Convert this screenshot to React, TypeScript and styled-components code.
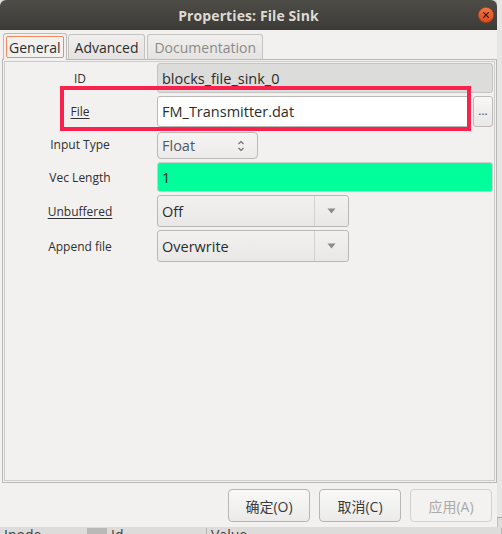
import React from "react";
import styled, { createGlobalStyle, css } from "styled-components";

const GlobalStyle = createGlobalStyle`
  html, body { margin: 0; padding: 0; background: #deddda; }
  body { font-family: "Open Sans", "Noto Sans", "Noto Sans CJK SC", sans-serif; color: #3c3c3c; }
  * { box-sizing: border-box; }
`;

const Screen = styled.div`
  width: 502px;
  height: 534px;
  overflow: hidden;
  display: grid;
  grid-template-columns: 497px 5px;
  grid-template-rows: 527px 7px;
`;

const Window = styled.div`
  display: flex;
  flex-direction: column;
  background: #f2f1f0;
  border-radius: 6px 6px 0 0;
  overflow: hidden;
  box-shadow: 1px 0 0 rgba(0, 0, 0, 0.12);
`;

const TitleBar = styled.div`
  height: 30px;
  flex: none;
  display: grid;
  grid-template-columns: 1fr auto 1fr;
  align-items: center;
  background: linear-gradient(#4d4c47, #3c3b37);
  color: #dfdbd2;
  font-weight: 700;
  font-size: 14px;
`;

const Title = styled.div`
  grid-column: 2;
  letter-spacing: 0.1px;
`;

const CloseBtn = styled.div`
  grid-column: 3;
  justify-self: end;
  margin-right: 3px;
  width: 16px;
  height: 16px;
  display: flex;
`;

const Body = styled.div`
  flex: 1;
  display: flex;
  flex-direction: column;
  padding: 3px 0 5px 0;
`;

const TabRow = styled.div`
  display: flex;
  align-items: flex-end;
  height: 26px;
  padding-left: 3px;
  position: relative;
  z-index: 1;
`;

const Tab = styled.div<{ $active?: boolean; $dim?: boolean; $gap?: number }>`
  display: flex;
  align-items: center;
  justify-content: center;
  font-size: 14px;
  margin-left: ${(p) => p.$gap ?? 0}px;
  border: 1px solid #c4c3c0;
  border-bottom: none;
  border-radius: 3px 3px 0 0;
  color: ${(p) => (p.$dim ? "#8b8a88" : "#2e2e2e")};
  ${(p) =>
    p.$active
      ? css`
          height: 27px;
          margin-bottom: -1px;
          padding: 2px;
          background: #f2f1f0;
          border-color: #bcbbb8;
        `
      : css`
          height: 25px;
          padding: 0 6px;
          background: linear-gradient(#f0efee, #e4e3e1);
        `}
`;

const FocusRing = styled.span`
  height: 100%;
  display: flex;
  align-items: center;
  padding: 0 2px;
  border: 1px solid #ef8a62;
  border-radius: 2px;
`;

const Panel = styled.div`
  margin-left: 2px;
  width: 495px;
  height: 424px;
  border: 1px solid #b9b8b5;
  padding: 1px;
  background: #f2f1f0;
`;

const Frame = styled.div`
  height: 100%;
  border: 1px solid #cdccc9;
  padding: 1px 1px 0 0;
  display: flex;
  flex-direction: column;
  gap: 3px;
`;

const Row = styled.div<{ $h: number }>`
  display: grid;
  grid-template-columns: 150px 1fr;
  column-gap: 2px;
  height: ${(p) => p.$h}px;
  align-items: center;
  position: relative;
`;

const Label = styled.div<{ $underline?: boolean }>`
  text-align: center;
  font-size: 12px;
  color: #2f2f2f;
  text-decoration: ${(p) => (p.$underline ? "underline" : "none")};
  text-underline-offset: 2px;
  align-self: center;
`;

const Entry = styled.div<{ $tone?: "readonly" | "normal" | "ok" }>`
  height: 100%;
  display: flex;
  align-items: center;
  padding-left: 4px;
  font-size: 14.5px;
  color: #2c2c2c;
  border-radius: 3px;
  border: 1px solid #bab9b6;
  background: ${(p) =>
    p.$tone === "readonly" ? "#dcdcdb" : p.$tone === "ok" ? "#00fe9a" : "#ffffff"};
  ${(p) => p.$tone === "readonly" && css`border-color: #c5c4c1;`}
  ${(p) => p.$tone === "ok" && css`border-color: #c8d0cc;`}
`;

const FileWrap = styled.div`
  height: 100%;
  display: grid;
  grid-template-columns: 1fr 20px;
  column-gap: 3px;
`;

const SmallButton = styled.div`
  display: flex;
  align-items: center;
  justify-content: center;
  border: 1px solid #bcbbb8;
  border-radius: 3px;
  background: linear-gradient(#f7f7f6, #e9e8e7);
  font-size: 12px;
  color: #4a4a4a;
  padding-bottom: 2px;
`;

const Spin = styled.div`
  align-self: end;
  width: 101px;
  height: 27px;
  display: grid;
  grid-template-columns: 1fr 20px;
  align-items: center;
  border: 1px solid #bab9b6;
  border-radius: 4px;
  background: linear-gradient(#f5f4f3, #eceaea);
  font-size: 14.5px;
  color: #4e5964;
  padding-left: 4px;
`;

const Combo = styled.div`
  width: 192px;
  height: 100%;
  display: grid;
  grid-template-columns: 1fr 34px;
  border: 1px solid #b9b8b5;
  border-radius: 3px;
  background: linear-gradient(#f2f1f0, #e9e8e7);
  font-size: 14.5px;
  color: #2c2c2c;
`;

const ComboText = styled.div`
  display: flex;
  align-items: center;
  padding-left: 4px;
`;

const ComboArrow = styled.div`
  display: flex;
  align-items: center;
  justify-content: center;
  border-left: 1px solid #d2d1ce;
`;

const Highlight = styled.div`
  position: absolute;
  left: 55px;
  top: -10px;
  width: 411px;
  height: 45px;
  border: 4px solid #f9214e;
  pointer-events: none;
`;

const ButtonRow = styled.div`
  display: flex;
  justify-content: flex-end;
  gap: 9px;
  margin-top: 6px;
  padding-right: 5px;
`;

const DialogButton = styled.div<{ $disabled?: boolean }>`
  width: 82px;
  height: 33px;
  display: flex;
  align-items: center;
  justify-content: center;
  font-family: "Open Sans", "Noto Sans CJK SC", sans-serif;
  font-size: 14px;
  border-radius: 4px;
  ${(p) =>
    p.$disabled
      ? css`
          color: #aaa9a7;
          border: 1px solid #d2d1ce;
          background: #f3f2f1;
        `
      : css`
          color: #3a3a3a;
          border: 1px solid #b7b6b3;
          background: linear-gradient(#f9f9f8, #ebeae9);
        `}
`;

const Side = styled.div`
  background: #e6e6e4;
  border-bottom: 1px solid #a9a9a7;
  margin-bottom: 9px;
`;

const Strip = styled.div`
  grid-column: 1 / span 2;
  background: #dddcda;
  overflow: hidden;
  display: flex;
  font-size: 14px;
  color: #3a3a3a;
  line-height: 14px;
`;

const HeadCell = styled.div<{ $w: number; $dark?: boolean }>`
  width: ${(p) => p.$w}px;
  flex: none;
  margin-top: 1px;
  padding-left: 4px;
  border-right: 1px solid #b8b7b4;
  background: ${(p) => (p.$dark ? "#b9b9b7" : "transparent")};
`;

const CloseIcon = () => (
  <svg width="16" height="16" viewBox="0 0 16 16">
    <defs>
      <linearGradient id="cg" x1="0" y1="0" x2="0" y2="1">
        <stop offset="0" stopColor="#f27a48" />
        <stop offset="1" stopColor="#de4716" />
      </linearGradient>
    </defs>
    <circle cx="8" cy="8" r="7.6" fill="url(#cg)" stroke="#b9400f" strokeWidth="0.6" />
    <path d="M5.6 5.6 L10.4 10.4 M10.4 5.6 L5.6 10.4" stroke="#3b1c0c" strokeWidth="1.2" strokeLinecap="round" />
  </svg>
);

const SpinArrows = () => (
  <svg width="8" height="14" viewBox="0 0 8 14">
    <path d="M1.5 5 L4 2.5 L6.5 5" fill="none" stroke="#6a6a6a" strokeWidth="1.1" />
    <path d="M1.5 9 L4 11.5 L6.5 9" fill="none" stroke="#6a6a6a" strokeWidth="1.1" />
  </svg>
);

const DownArrow = () => (
  <svg width="9" height="6" viewBox="0 0 9 6">
    <path d="M0.5 0.5 L8.5 0.5 L4.5 5.5 Z" fill="#8a8a88" />
  </svg>
);

export default function App() {
  return (
    <>
      <GlobalStyle />
      <Screen>
        <Window>
          <TitleBar>
            <Title>Properties: File Sink</Title>
            <CloseBtn>
              <CloseIcon />
            </CloseBtn>
          </TitleBar>
          <Body>
            <TabRow>
              <Tab $active>
                <FocusRing>General</FocusRing>
              </Tab>
              <Tab $gap={1}>Advanced</Tab>
              <Tab $gap={2} $dim>
                Documentation
              </Tab>
            </TabRow>
            <Panel>
              <Frame>
                <Row $h={30}>
                  <Label>ID</Label>
                  <Entry $tone="readonly">blocks_file_sink_0</Entry>
                </Row>
                <Row $h={31}>
                  <Label $underline>File</Label>
                  <FileWrap>
                    <Entry>FM_Transmitter.dat</Entry>
                    <SmallButton>...</SmallButton>
                  </FileWrap>
                  <Highlight />
                </Row>
                <Row $h={29}>
                  <Label>Input Type</Label>
                  <Spin>
                    <span>Float</span>
                    <SpinArrows />
                  </Spin>
                </Row>
                <Row $h={30}>
                  <Label>Vec Length</Label>
                  <Entry $tone="ok">1</Entry>
                </Row>
                <Row $h={32}>
                  <Label $underline>Unbuffered</Label>
                  <Combo>
                    <ComboText>Off</ComboText>
                    <ComboArrow>
                      <DownArrow />
                    </ComboArrow>
                  </Combo>
                </Row>
                <Row $h={32}>
                  <Label>Append file</Label>
                  <Combo>
                    <ComboText>Overwrite</ComboText>
                    <ComboArrow>
                      <DownArrow />
                    </ComboArrow>
                  </Combo>
                </Row>
              </Frame>
            </Panel>
            <ButtonRow>
              <DialogButton>确定(O)</DialogButton>
              <DialogButton>取消(C)</DialogButton>
              <DialogButton $disabled>应用(A)</DialogButton>
            </ButtonRow>
          </Body>
        </Window>
        <Side />
        <Strip>
          <HeadCell $w={88}>Inode</HeadCell>
          <HeadCell $w={19} $dark />
          <HeadCell $w={100}>Id</HeadCell>
          <HeadCell $w={295}>Value</HeadCell>
        </Strip>
      </Screen>
    </>
  );
}
